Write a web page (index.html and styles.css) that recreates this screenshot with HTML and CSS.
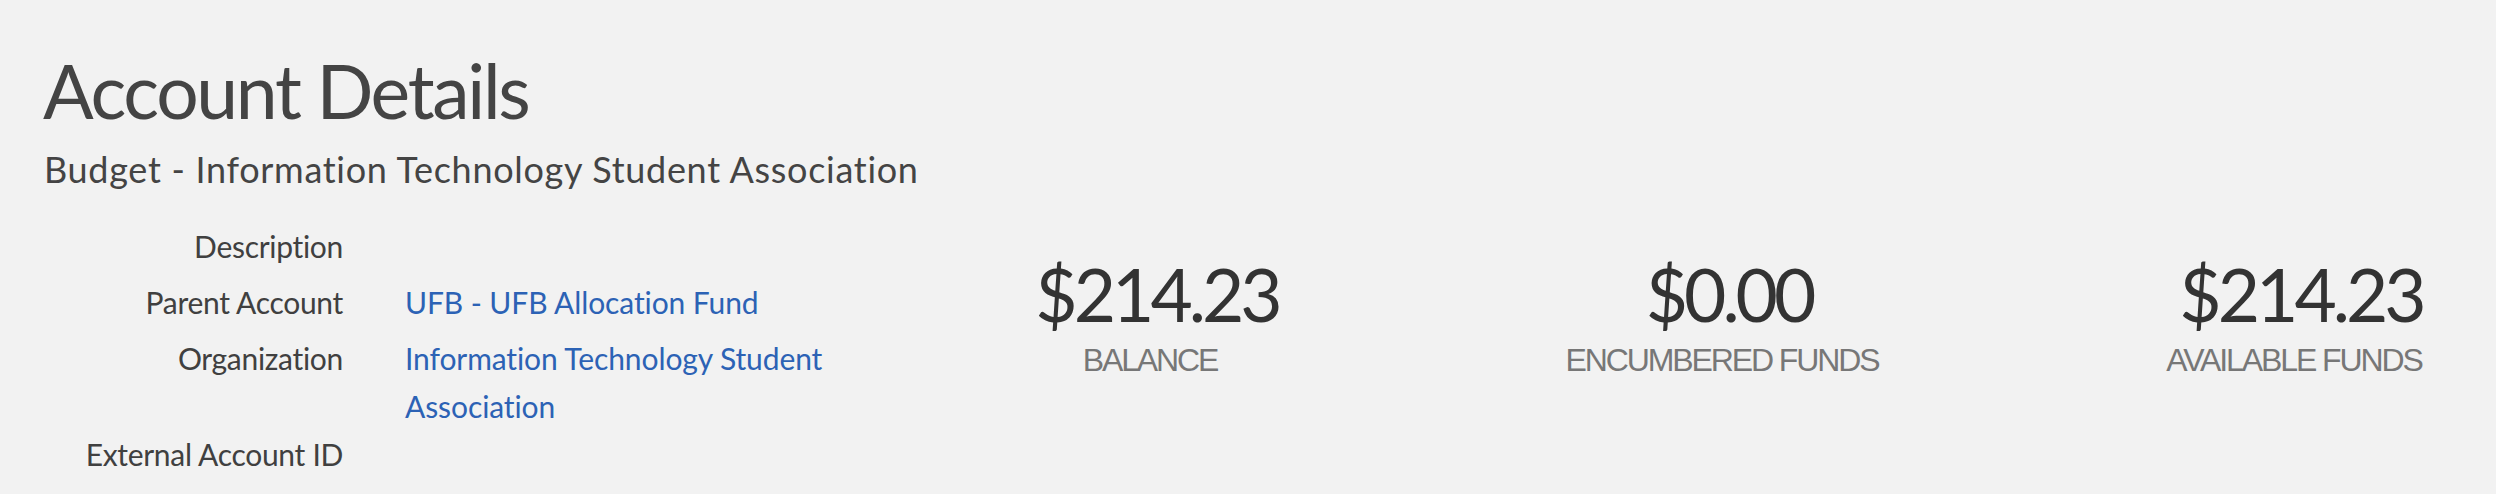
FILE: index.html
```html
<!DOCTYPE html>
<html lang="en">
<head>
<meta charset="utf-8">
<title>Account Details</title>
<link rel="stylesheet" href="styles.css">
</head>
<body>
<main class="page">
  <header class="page-header">
    <h1 class="title">Account Details</h1>
    <h2 class="subtitle">Budget - Information Technology Student Association</h2>
  </header>
  <section class="content">
    <dl class="details">
      <div class="row"><dt>Description</dt><dd></dd></div>
      <div class="row"><dt>Parent Account</dt><dd><a href="#">UFB - UFB Allocation Fund</a></dd></div>
      <div class="row"><dt>Organization</dt><dd><a href="#">Information Technology Student Association</a></dd></div>
      <div class="row"><dt>External Account ID</dt><dd></dd></div>
    </dl>
    <div class="stats">
      <div class="stat">
        <div class="amount">$214.23</div>
        <div class="label">BALANCE</div>
      </div>
      <div class="stat">
        <div class="amount">$0.00</div>
        <div class="label">ENCUMBERED FUNDS</div>
      </div>
      <div class="stat">
        <div class="amount">$214.23</div>
        <div class="label">AVAILABLE FUNDS</div>
      </div>
    </div>
  </section>
</main>
</body>
</html>
```
FILE: styles.css
```css
html, body {
  margin: 0;
  padding: 0;
  background: #f2f2f2;
}

body {
  font-family: Lato, "Noto Sans", sans-serif;
  color: #444;
}

.page {
  padding: 45px 0 0 40px;
}

.title {
  margin: 0 0 0 3px;
  font-weight: 400;
  font-size: 75px;
  line-height: 90px;
  letter-spacing: -2.3px;
  color: #444;
}

.subtitle {
  margin: 10px 0 0 4px;
  font-weight: 400;
  font-size: 36px;
  line-height: 48px;
  letter-spacing: 0.7px;
  color: #444;
}

.content {
  display: flex;
  margin-top: 29px;
}

.details {
  margin: 0;
  width: 920px;
  flex: none;
  font-size: 30px;
  line-height: 48px;
}

.row {
  display: grid;
  grid-template-columns: 303px 470px;
  column-gap: 62px;
  min-height: 56px;
}

.row dt {
  text-align: right;
  color: #404040;
  letter-spacing: -0.3px;
}

.row dd {
  margin: 0;
}

.row a {
  color: #2c62b5;
  text-decoration: none;
  letter-spacing: -0.1px;
}

.stats {
  display: grid;
  grid-template-columns: repeat(3, 390px);
  column-gap: 182px;
  padding-top: 32px;
  align-items: start;
}

.stat {
  text-align: center;
}

.amount {
  font-size: 73px;
  line-height: 80px;
  letter-spacing: -4px;
  padding-left: 4px;
  color: #333;
}

.label {
  margin-top: 6px;
  padding-right: 10px;
  font-family: "Liberation Sans", Arial, sans-serif;
  font-size: 32px;
  line-height: 40px;
  letter-spacing: -2.1px;
  color: #777;
}
```
